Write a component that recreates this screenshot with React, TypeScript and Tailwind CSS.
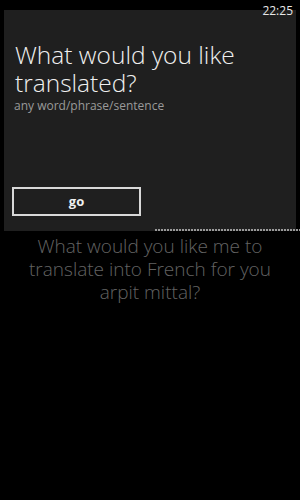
export default function App() {
  return (
    <div className="relative w-[300px] h-[500px] bg-black overflow-hidden font-['Open_Sans',sans-serif]">
      <span className="absolute right-[7px] top-[2px] text-[12px] text-[#e8e8e8] z-10">22:25</span>

      <div className="pt-[10px]">
        <div className="mx-[4px] h-[221px] bg-[#1f1f1f] flex flex-col px-[8px] pt-[31px]">
          <h1 className="pl-[3px] text-[24.5px] leading-[28px] text-[#f0f0f0] font-light">
            What would you like translated?
          </h1>
          <p className="pl-[2px] text-[12px] leading-[14px] text-[#9a9a9a] mt-[2px]">
            any word/phrase/sentence
          </p>
          <button className="mt-[74px] w-[129px] h-[29px] border-2 border-[#d8d8d8] text-[#f0f0f0] text-[13px] font-bold">
            go
          </button>
        </div>
        <div className="ml-[155px] -mt-[2px] h-[2px] bg-[repeating-linear-gradient(90deg,#9a9a9a_0_2px,transparent_2px_3px)]" />
      </div>

      <p className="mt-[4px] px-[20px] text-center text-[19px] leading-[23px] text-[#636363] font-light">
        What would you like me to translate into French for you arpit mittal?
      </p>
    </div>
  );
}
